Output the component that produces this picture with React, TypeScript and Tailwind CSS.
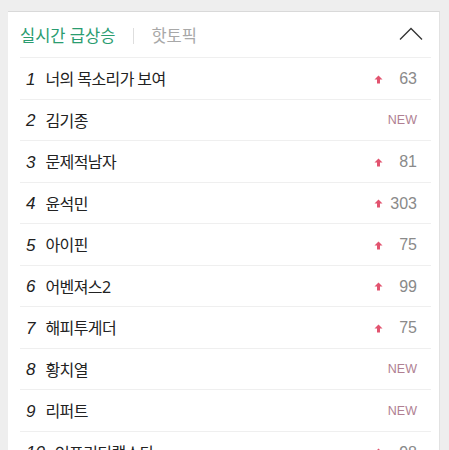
const items = [
  { rank: 1, title: "너의 목소리가 보여", change: "63" },
  { rank: 2, title: "김기종", change: "NEW" },
  { rank: 3, title: "문제적남자", change: "81" },
  { rank: 4, title: "윤석민", change: "303" },
  { rank: 5, title: "아이핀", change: "75" },
  { rank: 6, title: "어벤져스2", change: "99" },
  { rank: 7, title: "해피투게더", change: "75" },
  { rank: 8, title: "황치열", change: "NEW" },
  { rank: 9, title: "리퍼트", change: "NEW" },
  { rank: 10, title: "언프리티랩스타", change: "98" },
];

function UpArrow() {
  return (
    <svg width="9" height="9" viewBox="0 0 9 9" className="shrink-0">
      <path d="M4.5 0.5 L8.5 4.6 L6 4.6 L6 8.5 L3 8.5 L3 4.6 L0.5 4.6 Z" fill="#e2536f" />
    </svg>
  );
}

export default function App() {
  return (
    <div
      className="h-[450px] bg-[#eeeeee] pt-[11px] overflow-hidden"
      style={{ fontFamily: '"Noto Sans", "Noto Sans CJK KR", sans-serif' }}
    >
      <div className="ml-[8px] w-[432px] bg-white border-t border-[#d9d9d9] border-r border-r-[#e2e2e2] pl-[12px] pr-[8px]">
        <div className="h-[46px] pt-[3px] flex items-center border-b border-[#efefef]">
          <span className="text-[16.5px] text-[#2a9c70]">실시간 급상승</span>
          <span className="ml-[18px] mr-[17px] w-px h-[16px] bg-[#dedede]" />
          <span className="text-[16.5px] text-[#a8a8a8]">핫토픽</span>
          <svg width="24" height="14" viewBox="0 0 24 14" className="ml-auto mr-[8px] mt-[-4px]">
            <path d="M1 12.5 L12 1.5 L23 12.5" fill="none" stroke="#333" strokeWidth="1.3" />
          </svg>
        </div>
        {items.map((it) => (
          <div key={it.rank} className="h-[41.5px] pt-[2px] flex items-center border-b border-[#efefef] pl-[6px] pr-[14px]">
            <span
              className="italic text-[17px] text-[#222]"
              style={{ fontFamily: '"Liberation Sans", sans-serif' }}
            >
              {it.rank}
            </span>
            <span className="ml-[10px] text-[16px] text-[#222] tracking-[-0.6px]">{it.title}</span>
            <div className="ml-auto flex items-center">
              {it.change === "NEW" ? (
                <span
                  className="text-[12.5px] text-[#b07f92]"
                  style={{ fontFamily: '"Liberation Sans", sans-serif' }}
                >
                  NEW
                </span>
              ) : (
                <>
                  <UpArrow />
                  <span
                    className="w-[34px] text-right text-[16px] text-[#8a8a8a]"
                    style={{ fontFamily: '"Liberation Sans", sans-serif' }}
                  >
                    {it.change}
                  </span>
                </>
              )}
            </div>
          </div>
        ))}
      </div>
    </div>
  );
}
